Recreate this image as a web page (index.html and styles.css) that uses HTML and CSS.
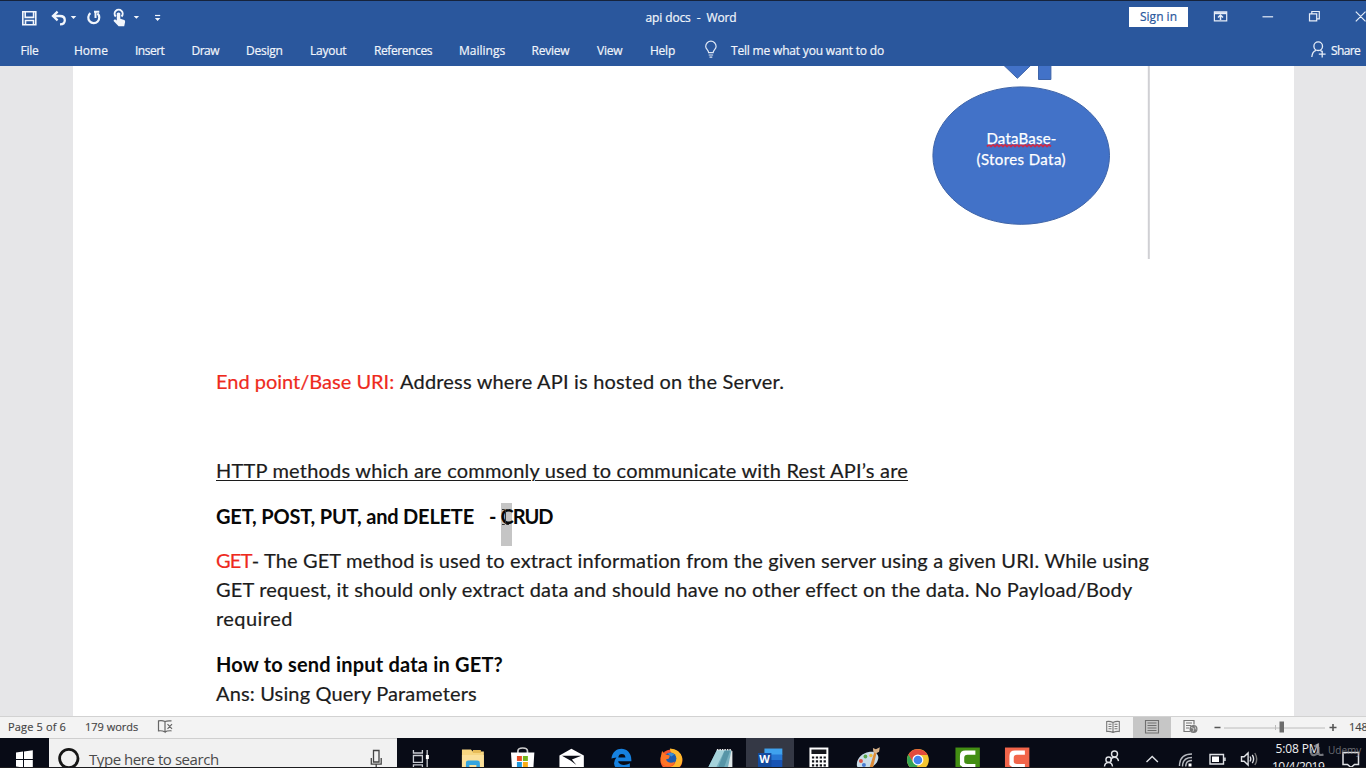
FILE: index.html
```html
<!DOCTYPE html>
<html lang="en">
<head>
<meta charset="utf-8">
<title>api docs - Word</title>
<link rel="stylesheet" href="styles.css">
</head>
<body>
<div class="screen">
  <header class="ribbon">
    <div class="titlebar">
      <svg class="quick" width="170" height="34" viewBox="0 0 170 34">
        <g fill="none" stroke="#f2f6fc" stroke-width="1.6">
          <path d="M22.8 11.8h13v13h-13zM25.2 12v5.4h8.4V12M25.5 24.5v-4h8v4"/>
          <path d="M53 16h6.800q5 0 5 4.200 0 4-4.800 4.200M57.600 11.600L53 16l4.600 4.400" stroke-width="2.300"/>
          <path d="M90.400 13.200a5.500 5.500 0 1 0 7 .2" stroke-width="2.200"/>
          <path d="M94 11.800h5.300M95.500 12v6" stroke-width="2"/>
          <path d="M115.800 16.500a4 4 0 1 1 5.700 0" stroke-width="2"/>
        </g>
        <g fill="#f2f6fc">
          <path d="M116.800 13.200q1.800-1.500 3.500 0v5.500l4 1.300q1 .6.800 2l-.9 4.200h-5.600l-5-5.200q0-2 1.800-1.400l1.400 1z"/>
          <path d="M70.700 16h5.600l-2.800 3zM133.700 16h5.400l-2.700 2.800zM154.900 18.100h5.400l-2.700 3z"/>
          <path d="M155 14.900h5.200v1.200H155z"/>
        </g>
      </svg>
      <div class="doc-title">api docs&nbsp; - &nbsp;Word</div>
      <div class="sign-in">Sign in</div>
      <svg class="window-controls" width="178" height="34" viewBox="1188 0 178 34">
        <g fill="none" stroke="#e6edf8" stroke-width="1.2">
          <path d="M1214.4 11.8h12.3v9h-12.3z"/>
          <path d="M1214.4 13.2h12.3" stroke-width="2"/>
          <path d="M1220.5 20v-4.5M1218 17.5l2.5-2.5 2.5 2.5" stroke-width="1.5"/>
          <path d="M1262.5 16.8h10.6"/>
          <path d="M1309.5 13.8h7.2v7h-7.2zM1311.8 13.5v-2h7.5v7.4h-2.4M1355.8 11.7l9.7 9.7M1365.5 11.7l-9.7 9.7"/>
        </g>
      </svg>
    </div>
    <nav class="tabs">
      <span>File</span><span class="home">Home</span><span class="tight">Insert</span><span class="tight">Draw</span><span>Design</span><span>Layout</span><span class="refs">References</span><span class="home">Mailings</span><span>Review</span><span>View</span><span>Help</span>
      <svg width="27" height="32" viewBox="704 35 27 32"><path d="M708.6 53.6c0-2.6-2.9-3.4-2.9-6.2a5.2 5.2 0 0 1 10.4 0c0 2.8-2.9 3.6-2.9 6.2zM708.7 56h4.4M709.5 58.2h2.8" fill="none" stroke="#dfe8f6" stroke-width="1.2"/></svg>
      <span class="tell">Tell me what you want to do</span>
      <svg width="21" height="32" viewBox="1310 35 21 32"><g fill="none" stroke="#e6edf8" stroke-width="1.3"><circle cx="1318.2" cy="47.2" r="4.3"/><path d="M1311.8 58q.4-5.4 4.2-6.7M1320.5 51l1 1.6M1318.8 55.2h6.8M1322.2 51.8v6.8"/></g></svg>
      <span class="share">Share</span>
    </nav>
  </header>

  <main class="workspace">
    <article class="page">
      <svg class="drawing" width="1221" height="193" viewBox="0 0 1221 193">
        <g fill="#4272c8" stroke="#3e64a8" stroke-width="1">
          <path d="M930.5-1h27.6L944.4 12.300zM965.500-1h12.400v14.500h-12.400z"/>
          <ellipse cx="948.2" cy="89.6" rx="88.3" ry="68.7"/>
        </g>
        <path d="M1075.800 0v193" stroke="#d0d0d4" stroke-width="2"/>
        <path d="M914 80.500l2-1.800 2 1.800 2-1.800 2 1.800 2-1.800 2 1.800 2-1.800 2 1.800 2-1.800 2 1.800 2-1.800 2 1.800 2-1.800 2 1.800 2-1.800 2 1.800 2-1.800 2 1.800 2-1.800 2 1.800 2-1.800 2 1.800 2-1.800 2 1.800 2-1.800 2 1.800 2-1.800 2 1.800 2-1.800 2 1.800 2-1.800 2 1.800" fill="none" stroke="#c52d50" stroke-width="1.800"/>
        <text class="shape-text" x="913.4" y="77.6" textLength="70">DataBase-</text>
        <text class="shape-text" x="903.5" y="99.4" textLength="89">(Stores Data)</text>
      </svg>
      <div class="body-text">
        <p class="endpoint"><span class="red">End point/Base URI:</span> <span class="address">Address where API is hosted on the Server.</span></p>
        <p class="methods"><u>HTTP methods which are commonly used to communicate with Rest API’s are</u></p>
        <p class="verbs"><b class="verb-list">GET, POST, PUT, and DELETE</b><b class="dash">-</b><b class="crud"><i class="selection"></i><span>CRUD</span><svg class="ibeam" width="9" height="18" viewBox="0 0 9 18"><path d="M1 1.5h2.500l1 1 1-1H8M4.500 2.500v13M1 16.500h2.500l1-1 1 1H8" fill="none" stroke="#333"/></svg></b></p>
        <p class="get"><span class="red">GET</span><span class="hyphen">- </span><span class="l1">The GET method is used to extract information from the given server using a given URI. While using</span><br><span class="l2">GET request, it should only extract data and should have no other effect on the data. No Payload/Body</span><br><span class="l3">required</span></p>
        <p class="answer"><b>How to send input data in GET?</b><br>Ans: Using Query Parameters</p>
      </div>
    </article>
  </main>

  <footer class="status">
    <span class="page-no">Page 5 of 6</span><span class="words">179 words</span>
    <svg width="20" height="21" viewBox="156 717 20 21"><path d="M165 721.500q-3-1.400-6.500-.6v10q3.500-.6 6.500 1.200zM165 721.500q2-1 6.500-.6M165 732q1.800-1.400 6.500-1.200M167.500 724.200l4.500 4.600M172 724.200l-4.500 4.600" fill="none" stroke="#666" stroke-width="1.200"/></svg>
    <div class="views">
      <svg class="view" width="38" height="21" viewBox="1094 717 38 21"><path d="M1113 722.500q-3-1.600-6.300-1v10q3.300-.6 6.300 1 3-1.600 6.300-1v-10q-3.300-.6-6.300 1zv10M1108.500 724.300h3M1108.500 726.500h3M1108.500 728.700h3M1114.500 724.300h3M1114.500 726.500h3M1114.500 728.700h3" fill="none" stroke="#777" stroke-width="1.100"/></svg>
      <svg class="view active" width="38" height="21" viewBox="1133 717 38 21"><path d="M1145.500 720.500h13v12.500h-13zM1147.500 723h9M1147.500 725.500h9M1147.500 728h9M1147.500 730.500h9" fill="none" stroke="#707070" stroke-width="1.100"/></svg>
      <svg class="view" width="38" height="21" viewBox="1171 717 38 21"><path d="M1190 731.500h-6v-11h10v4M1186 723h6M1186 725.500h5M1186 728h3" fill="none" stroke="#777" stroke-width="1.200"/><circle cx="1193.500" cy="729" r="4" fill="#777"/><path d="M1191 727.500l3 1-1 3M1195 726.500l1 3" stroke="#ddd" fill="none" stroke-width=".8"/></svg>
      <svg width="131" height="21" viewBox="1211 717 131 21"><path d="M1225 728h101" stroke="#bcbcbc"/><path d="M1276.500 725v5" stroke="#bcbcbc"/><path d="M1215.500 727.500h6M1330.500 727.500h7M1334 724v7" stroke="#555" stroke-width="1.600"/><path d="M1280.500 721.500h4.500v11h-4.500z" fill="#6c6c6c"/></svg>
      <span class="zoom">148%</span>
    </div>
  </footer>

  <div class="taskbar">
    <svg class="start" width="49" height="30" viewBox="0 0 49 30"><path d="M16 14.500l7-.9V21h-7zM24 13.400l8.800-1.100V21H24zM16 22h7v7.500l-7-.9zM24 22h8.800v9L24 29.800z" fill="#fff"/></svg>
    <div class="search">
      <svg width="40" height="30" viewBox="49 0 40 30"><circle cx="68.800" cy="20.500" r="9.200" fill="none" stroke="#161616" stroke-width="2.800"/></svg>
      <span class="search-text">Type here to search</span>
      <svg class="mic" width="20" height="30" viewBox="367 0 20 30"><path d="M373.500 12.500h5.500V24h-5.500zM371.300 20v6.200h9.900V20M376.200 26v4" fill="none" stroke="#444" stroke-width="1.300"/></svg>
    </div>
    <div class="apps">
      <svg viewBox="0 0 50 30"><path d="M16.500 12v3h9v-3M16.500 17.500h9v7h-9zM16.500 30v-3h9v3M30.300 12v18" fill="none" stroke="#c9ccd2" stroke-width="1.300"/><path d="M29 17h3v4h-3z" fill="#fff"/></svg>
      <svg viewBox="0 0 50 30"><path d="M15 11.500h9l2 2h11V30H15z" fill="#f7d680"/><path d="M26 12h8v3h-8z" fill="#e7bc58"/><path d="M15 17h22v13H15z" fill="#fbe09a"/><path d="M19 30v-5q0-2.500 2.500-2.500h9q2.500 0 2.500 2.500v5h-3.500v-3h-7v3z" fill="#35a5df"/></svg>
      <svg viewBox="0 0 50 30"><path d="M21 15v-2q0-3 4.800-3t4.800 3v2" fill="none" stroke="#ccc" stroke-width="1.700"/><path d="M14 14.500h23.500L36.500 30H15z" fill="#fff"/><path d="M20 18h5v5h-5z" fill="#e84c24"/><path d="M26 18h5v5h-5z" fill="#75b51c"/><path d="M20 24h5v6h-5z" fill="#1e97dc"/><path d="M26 24h5v6h-5z" fill="#f9ad16"/></svg>
      <svg viewBox="0 0 50 30"><path d="M13.500 17.500l12-6.800 12.500 6.800V30H13.500z" fill="#fff"/><path d="M16 17.700h19.500L26 21.500l4.500 5.500-6-4.500z" fill="#0c0e17"/></svg>
      <svg viewBox="0 0 50 30"><path d="M15.500 20.500C17 7 35.500 7.500 35.500 22v1.200H22.300c.7 4.300 7 5 11.700 2.200V30H20q-4-5 .5-10.500-3 .4-5 1zM22.400 19.600h7.200q-.4-3.500-3.600-3.500t-3.600 3.500z" fill="#1681df" fill-rule="evenodd"/></svg>
      <svg viewBox="0 0 50 30"><circle cx="25.500" cy="22.500" r="11" fill="#f9532d"/><path d="M24 10.500q10 .5 12.300 9c1 7-3 11-8 12-4 1-9 0-11-3 8 2 13-1 12-7-1-4-5-6-5.300-11z" fill="#ffb82c"/><circle cx="24.500" cy="20.500" r="6" fill="#1d5caf"/><path d="M14.600 20l1.500-7 3.500 3.500 4.400 1-1 3-3 1c2 4 6 4 9 2-2 6-10 7-14 1z" fill="#ff7425"/><path d="M21.500 15.500q4-2 7 1l-3 2z" fill="#3d8ed1"/></svg>
      <svg viewBox="0 0 50 30"><path d="M21 12h14.500L34 30H12z" fill="#77b0bf"/><path d="M21 12h8L20 30h-8z" fill="#a6d3db"/><path d="M29 12h5.500L28 30h-6z" fill="#5795a7"/><path d="M35.500 12.500L32 30h4.500V13z" fill="#dfe8e9"/><path d="M21 11.800h14.500" stroke="#eee" stroke-width="1.500" stroke-dasharray="1.500 1"/></svg>
      <div class="word-tile"><svg viewBox="0 0 50 30"><path d="M18.500 10.500h18V17h-18z" fill="#3fa2ee"/><path d="M18.500 16.500h18v6h-18z" fill="#2677d4"/><path d="M18.500 22h18v8h-18z" fill="#1854b4"/><path d="M12 15h13.500v15H12z" fill="#144b9e"/><text x="13.200" y="25.500" class="w">W</text></svg></div>
      <svg viewBox="0 0 50 30"><path d="M14.500 9.500h19V30h-19z" fill="#fff"/><path d="M16.500 11.500h15V16h-15z" fill="#16171d"/><path d="M17 19.500h14M17 23.500h14M17 27.500h14" stroke="#16171d" stroke-width="2.200" stroke-dasharray="2.300 1.600"/></svg>
      <svg viewBox="0 0 50 30"><path d="M12 28c-1-7 5-13 12-14s11 3 9 8c-1 4-5 7-9 8H13z" fill="#c8dce8"/><circle cx="16" cy="23" r="2" fill="#e05544"/><circle cx="20.500" cy="18.500" r="1.900" fill="#58a64b"/><circle cx="26" cy="17.500" r="1.700" fill="#eebb3d"/><circle cx="19" cy="27" r="2" fill="#497bd1"/><path d="M24.500 30l5-16 2.200 1L28 30z" fill="#dc8a37"/><path d="M28 10l3 1.200 4-2-.8 4.500-3.200 1.800-2.500-1.500z" fill="#d8b38a"/></svg>
      <svg viewBox="0 0 50 30"><circle cx="23" cy="22" r="11" fill="#f4c631"/><path d="M13.500 16.500a11 11 0 0 1 19.200.5H23l-5 7z" fill="#e34b3d"/><path d="M13.500 16.500a11 11 0 0 0 6.500 16l3-5.500-5-3z" fill="#36a452"/><circle cx="23" cy="22" r="5.500" fill="#fff"/><circle cx="23" cy="22" r="4.300" fill="#4384ee"/></svg>
      <svg viewBox="0 0 50 30"><path d="M10.500 9.500h24.500V30H10.500z" fill="#438e13"/><path d="M30.500 12.500v4.200h-8q-3.200 0-3.200 3v3.800q0 2.500 3.200 2.500h8v4H19l-4-3v-9q0-5.500 5.500-5.500z" fill="#fff"/></svg>
      <svg viewBox="0 0 50 30"><path d="M10 9.500h24.500V30H10z" fill="#f2654a"/><path d="M30 12.500v4.200h-8q-3.200 0-3.200 3v3.800q0 2.500 3.200 2.500h8v4H18.500l-4-3v-9q0-5.500 5.500-5.500z" fill="#fff"/></svg>
    </div>
    <div class="tray">
      <svg width="175" height="30" viewBox="1094 0 175 30">
        <g fill="none" stroke="#dfe1e5" stroke-width="1.400">
          <circle cx="1114.500" cy="16" r="3"/><path d="M1110.800 23q.3-3.800 3.700-3.800t4 4"/>
          <circle cx="1108.600" cy="21.700" r="2.700"/><path d="M1104.500 28.500q.4-4 4-4t4 4"/>
          <path d="M1146.500 24l5.700-5.500 5.700 5.500"/>
          <path d="M1179.500 28q0-12 12.500-12M1182.500 28.500q0-9 9.500-9M1185.700 28.500q0-6 6.300-6" stroke="#b5b8be"/>
          <path d="M1210 16.500h13.500v9.500H1210zM1225 19.500v3.500"/>
          <path d="M1241.500 18.800h2.600l4-3.800v12l-4-3.800h-2.600zM1250 18.500q1.500 2.500 0 5M1252.300 16.800q2.600 4.200 0 8.400"/>
          <path d="M1254.800 15q3.800 6 0 12" stroke="#777"/>
        </g>
        <path d="M1188.500 25.500h3v3h-3zM1212 18.500h7V24h-7z" fill="#fff"/>
      </svg>
      <div class="clock"><span>5:08 PM</span><span class="date">10/4/2019</span></div>
      <svg class="notify" width="36" height="30" viewBox="1330 0 36 30"><path d="M1343 14.500h15.500v12h-4l-3.500 3-3.500-3h-4.500z" fill="none" stroke="#dfe1e5" stroke-width="1.500"/></svg>
      <div class="watermark"><svg width="20" height="16" viewBox="0 0 20 16"><path d="M3 7v2q0 5 3.500 4t3.500-5V2.500L6 4.500M10.500 5v6q.5 3 5 1.500" fill="none" stroke="#9a9ba0" stroke-width="2.200"/></svg><span>Udemy</span></div>
    </div>
  </div>
</div>
</body>
</html>
```
FILE: styles.css
```css
* { box-sizing: border-box; }
body { margin: 0; }
svg { display: block; flex: none; }

.screen {
  position: relative;
  width: 1366px;
  height: 768px;
  overflow: hidden;
  display: grid;
  grid-template-rows: 66px 650px 22px 30px;
  font-family: "Open Sans", "Noto Sans", sans-serif;
  white-space: nowrap;
}
.screen::after {
  content: "";
  position: absolute;
  inset: auto 0 0 0;
  height: 1px;
  background: #1c1c1f;
}

/* Ribbon */
.ribbon {
  background: #2a579d;
  border-top: 1px solid #16233b;
  color: #f1f5fb;
  font-size: 12px;
  letter-spacing: -0.24px;
  -webkit-text-stroke: 0.2px;
}
.titlebar { display: flex; height: 33px; }
.quick, .window-controls { margin-top: -1px; }
.doc-title { width: 959px; padding-left: 475.5px; line-height: 33px; letter-spacing: -0.12px; }
.sign-in {
  width: 59px;
  height: 20px;
  margin-top: 6px;
  background: #fff;
  color: #2a579d;
  text-align: center;
  line-height: 20px;
  letter-spacing: 0;
}
.tabs {
  display: grid;
  grid-template-columns: 53.5px 61px 56.5px 54.5px 64px 64px 85px 72.5px 65.5px 53px 54px 27px 579px 21px auto;
  padding-left: 20.5px;
  height: 32px;
  line-height: 33.5px;
}
.tabs .home { letter-spacing: 0; }
.tabs .tight { letter-spacing: -0.5px; }
.tabs .refs { letter-spacing: -0.41px; }
.tabs .tell { letter-spacing: -0.18px; }
.tabs .share { letter-spacing: -0.6px; }

/* Document */
.workspace { background: #e6e6e8; padding: 0 72px 0 73px; overflow: hidden; }
.page { width: 1221px; height: 650px; background: #fff; }
.shape-text { font: 15px Lato, Carlito, sans-serif; fill: #fff; stroke: #fff; stroke-width: 0.25px; }
.body-text {
  padding: 108px 0 0 143px;
  font: 20px/29px Lato, Carlito, sans-serif;
  color: #1c1c1c;
  letter-spacing: 0.15px;
  -webkit-text-stroke: 0.2px;
}
.body-text p { margin: 0; }
.body-text b { color: #080808; -webkit-text-stroke: 0; }
.red { color: #ee2a1d; letter-spacing: 0; }
.address { padding-left: 0.5px; letter-spacing: 0.18px; }
.body-text .methods { margin-top: 60px; letter-spacing: 0.198px; }
.methods u { text-decoration-thickness: 1px; text-underline-offset: 2px; }
.body-text .verbs { margin-top: 17px; display: flex; }
.verb-list { width: 273px; letter-spacing: -0.197px; }
.dash { width: 11.5px; }
.crud { position: relative; letter-spacing: -1px; }
.crud span { position: relative; }
.selection { position: absolute; left: 0; top: 1px; width: 11px; height: 43px; background: #c5c5c5; }
.ibeam { position: absolute; left: 0; top: 6px; }
.body-text .get { margin-top: 15px; line-height: 28.8px; }
.get .red { letter-spacing: -0.75px; }
.get .hyphen { letter-spacing: -0.2px; }
.get .l1 { letter-spacing: 0.133px; }
.get .l2 { letter-spacing: 0.175px; }
.get .l3 { letter-spacing: 0.45px; }
.body-text .answer { margin-top: 17.6px; }
.answer b { letter-spacing: 0.195px; }

/* Status bar */
.status {
  display: flex;
  background: #f3f3f3;
  border-top: 1px solid #d2d2d2;
  color: #444;
  font-size: 11px;
  line-height: 20px;
  -webkit-text-stroke: 0.15px;
}
.page-no { width: 85px; padding-left: 8px; letter-spacing: 0.15px; }
.words { width: 71px; letter-spacing: -0.02px; }
.views { display: flex; margin-left: 918px; }
.view { width: 38px; margin-right: 1px; }
.active { background: #c6c6c6; margin-right: 0; }
.zoom { padding-left: 8px; letter-spacing: 0; width: 26px; overflow: hidden; }

/* Taskbar */
.taskbar { display: flex; background: #080b16; overflow: hidden; }
.search { display: flex; width: 348px; background: #f1f1f1; border-top: 1px solid #cfcfcf; }
.search svg { margin-top: -1px; }
.search-text { width: 278px; font-size: 15px; letter-spacing: -0.44px; line-height: 40px; color: #4a4a4a; }
.apps { display: flex; width: 697px; }
.apps > svg, .word-tile svg { width: 49.8px; height: 30px; }
.word-tile { width: 49.8px; background: linear-gradient(90deg, #343845 48px, transparent 48px); }
.w { font: bold 11px "Open Sans", sans-serif; fill: #fff; }
.tray { position: relative; display: flex; color: #f0f0f0; font-size: 12px; }
.clock { width: 61px; display: flex; flex-direction: column; padding: 2px 0 0 3px; line-height: 18px; letter-spacing: -0.5px; }
.clock span:first-child { padding-left: 3.5px; letter-spacing: -0.13px; }
.watermark { position: absolute; left: 214px; top: 4px; display: flex; color: #8c8e93; opacity: .75; font-size: 10px; line-height: 17px; }
```
